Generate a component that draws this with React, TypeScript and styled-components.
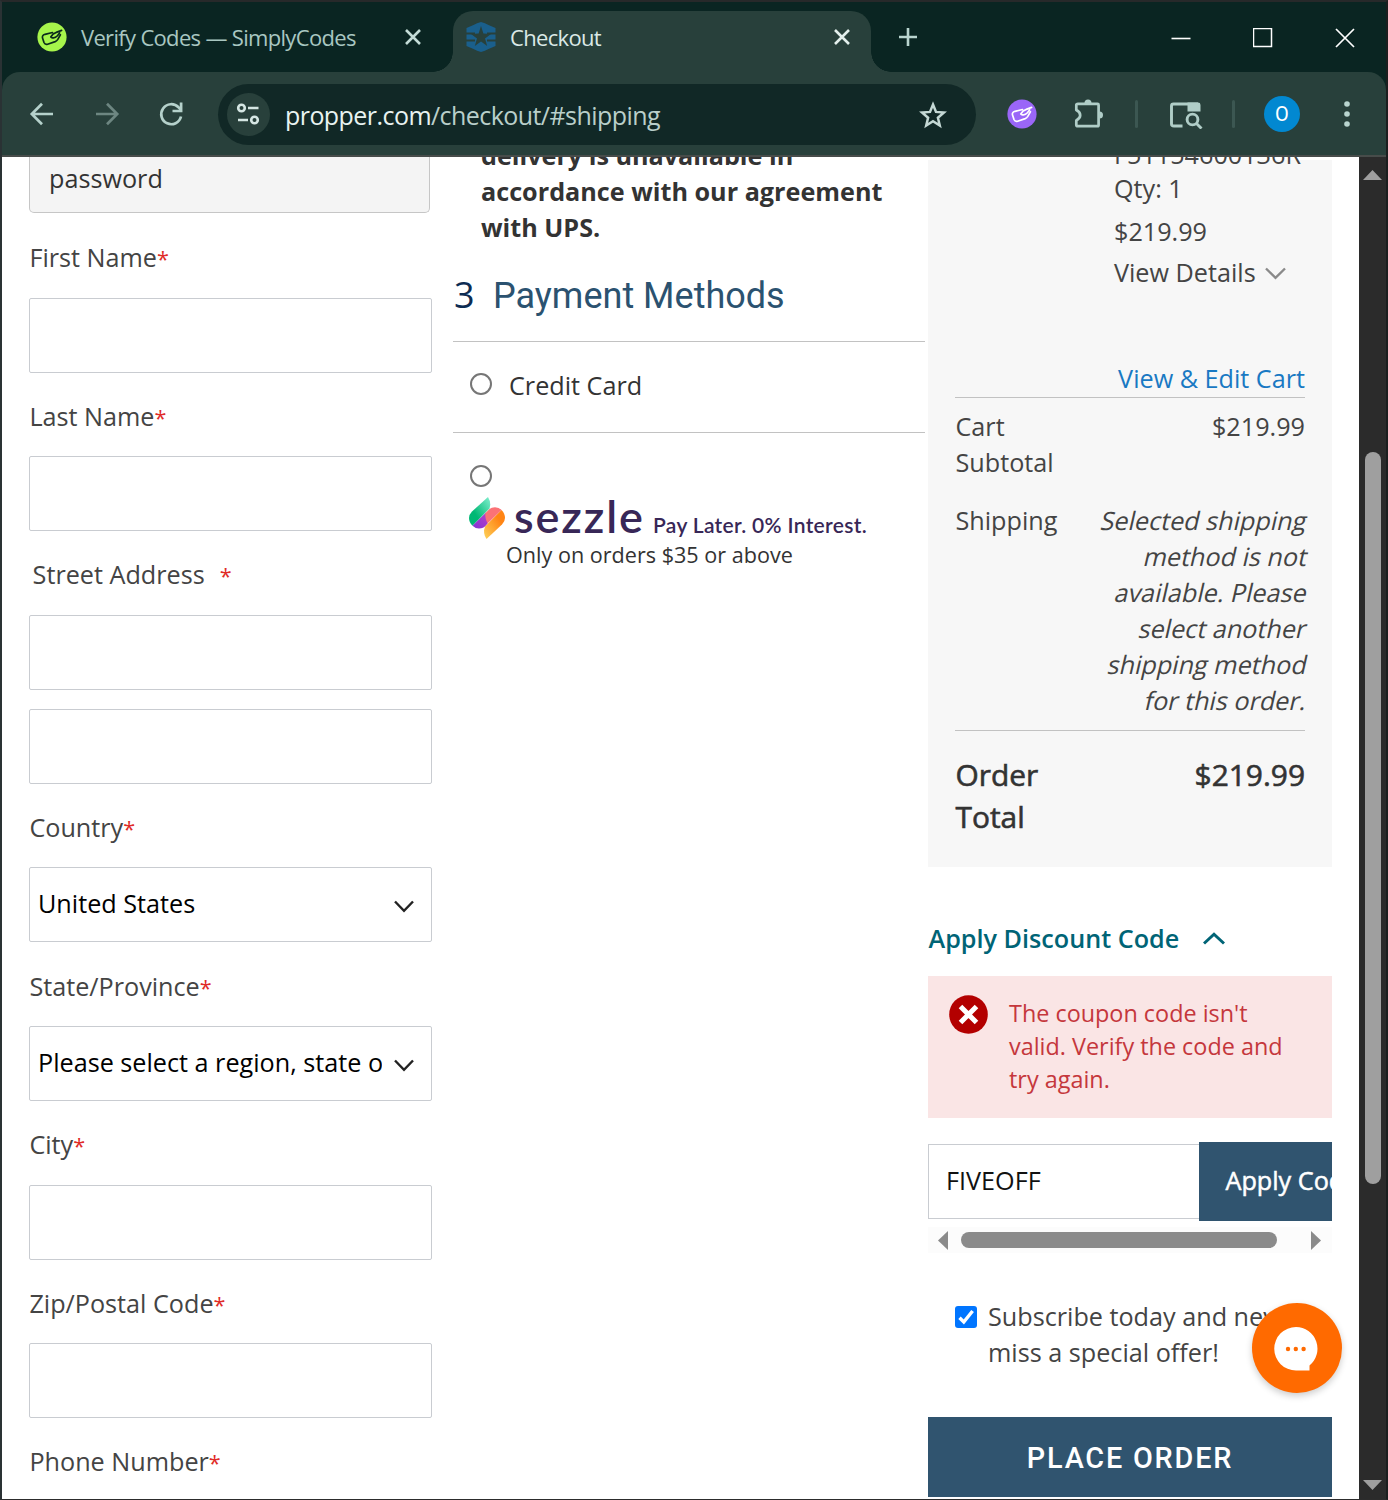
import React from "react";
import styled, { createGlobalStyle, css } from "styled-components";

const Global = createGlobalStyle`
  *, *::before, *::after { box-sizing: border-box; }
  html, body { margin: 0; padding: 0; background: #262626; }
  body { font-family: "Open Sans", "Noto Sans", sans-serif; }
`;

const Window = styled.div`
  width: 1388px;
  height: 1500px;
  display: flex;
  flex-direction: column;
  overflow: hidden;
  background: #0a2522;
  border-top: 2px solid #27292a;
  border-left: 2px solid #2a3234;
  border-right: 2px solid #1b1f1f;
  border-bottom: 1px solid #2c2c2c;
`;

/* ---------- tab strip ---------- */

const TabStrip = styled.div`
  display: flex;
  height: 70px;
  flex: none;
`;

const tabText = css`
  font-size: 22px;
  line-height: 32px;
  white-space: nowrap;
`;

const InactiveTab = styled.div`
  display: flex;
  align-items: center;
  width: 451px;
  padding: 0 0 0 35px;
  ${tabText}
  color: #a9c7c1;
`;

const ActiveTab = styled.div`
  position: relative;
  display: flex;
  align-items: center;
  width: 418px;
  height: 61px;
  margin-top: 9px;
  padding: 0 0 9px 13px;
  border-radius: 20px 20px 0 0;
  background: #28403b;
  ${tabText}
  color: #dbe9e6;

  &::before,
  &::after {
    content: "";
    position: absolute;
    bottom: 0;
    width: 20px;
    height: 20px;
  }
  &::before {
    left: -20px;
    background: radial-gradient(circle at 0 0, transparent 19.5px, #28403b 20px);
  }
  &::after {
    right: -20px;
    background: radial-gradient(circle at 100% 0, transparent 19.5px, #28403b 20px);
  }
`;

const TabTitle = styled.span`
  flex: 1;
  margin-left: 14px;
  letter-spacing: -0.68px;
`;

const TabClose = styled.span<{ $right: number }>`
  display: flex;
  margin-right: ${(p) => p.$right}px;
`;

const NewTab = styled.div`
  display: flex;
  align-items: center;
  padding-left: 27px;
  flex: 1;
`;

const WindowControls = styled.div`
  display: flex;
  align-items: center;
  gap: 62px;
  padding: 1px 31px 0 0;
`;

/* ---------- toolbar ---------- */

const Toolbar = styled.div`
  display: flex;
  align-items: center;
  height: 85px;
  flex: none;
  padding: 0 32px 0 27px;
  border-radius: 18px 18px 0 0;
  border-bottom: 2px solid #474c4a;
  background: #28403b;
`;

const NavButtons = styled.div`
  display: flex;
  align-items: center;
  gap: 38.6px;
  width: 189px;
`;

const Omnibox = styled.div`
  display: flex;
  align-items: center;
  width: 758px;
  height: 61px;
  margin-top: 2px;
  padding: 0 29px 0 9px;
  border-radius: 31px;
  background: #112826;
`;

const SiteInfo = styled.span`
  display: flex;
  align-items: center;
  justify-content: center;
  width: 43px;
  height: 43px;
  padding: 0 1px 1px 0;
  border-radius: 50%;
  background: #28403b;
`;

const Url = styled.span`
  flex: 1;
  margin-left: 15px;
  padding-top: 1px;
  font-size: 25px;
  line-height: 36px;
  letter-spacing: -0.56px;
  color: #b9cfca;
  b {
    font-weight: 400;
    color: #e8f3f1;
  }
`;

const ToolbarIcons = styled.div`
  display: flex;
  align-items: center;
  flex: 1;
  padding-left: 31px;
`;

const Divider = styled.i`
  width: 3px;
  height: 28px;
  border-radius: 2px;
  background: #3c5752;
`;

const Avatar = styled.span`
  display: flex;
  align-items: center;
  justify-content: center;
  width: 36px;
  height: 36px;
  border-radius: 50%;
  background: #0288d1;
  color: #fff;
  font: 400 20px Roboto, sans-serif;
`;

const Spacer = styled.i<{ $w: number }>`
  flex: none;
  width: ${(p) => p.$w}px;
`;

/* ---------- page ---------- */

const Viewport = styled.div`
  display: flex;
  height: 1342px;
  margin-left: -2px;
  padding-left: 2px;
  flex: none;
  overflow: hidden;
  background: linear-gradient(90deg, #6a6a6a 2px, #fff 2px);
`;

const Page = styled.main`
  display: grid;
  grid-template-columns: 403px 472px 404px;
  column-gap: 0;
  justify-content: start;
  width: 1357px;
  height: 1342px;
  padding-left: 27px;
  overflow: hidden;
  color: #333;
  font-size: 25.2px;
  line-height: 36px;
`;

const ShippingForm = styled.section`
  display: flex;
  flex-direction: column;
`;

const Hint = styled.div`
  flex: none;
  width: 401px;
  height: 55.7px;
  margin-bottom: 1.4px;
  padding: 3px 19px 0;
  border: 1px solid #c6c6c6;
  border-top: 0;
  border-radius: 0 0 5px 5px;
  background: #f4f4f4;
`;

const Field = styled.div`
  display: flex;
  flex-direction: column;
  margin-top: 25.1px;
`;

const Label = styled.label<{ $indent?: boolean }>`
  height: 36px;
  margin-bottom: 22.5px;
  padding-left: ${(p) => (p.$indent ? 3.6 : 0.4)}px;
  color: #444;
`;

const Star = styled.span<{ $gap?: number }>`
  margin-left: ${(p) => p.$gap ?? 0}px;
  color: #e02b27;
  font-size: 21.6px;
`;

const Control = styled.div`
  display: flex;
  align-items: center;
  justify-content: space-between;
  height: 75px;
  padding: 0 17px 3px 8px;
  border: 1px solid #c9ccd1;
  border-radius: 2px;
  background: #fff;
  color: #000;
  & + & {
    margin-top: 19px;
  }
  svg {
    margin-top: 6px;
  }
`;

const Choice = styled.span`
  width: 344px;
  overflow: hidden;
  white-space: nowrap;
`;

const Middle = styled.section`
  width: 472px;
  margin-left: 21px;
`;

const Notice = styled.p`
  margin: -20px 0 0;
  padding-left: 28px;
  font-weight: 700;
  color: #333;
`;

const StepTitle = styled.h2`
  display: flex;
  align-items: center;
  height: 97px;
  margin: 0;
  padding-top: 5px;
  border-bottom: 1px solid #c2c2c2;
  font: 400 36px/48px Roboto, sans-serif;
  color: #2b5270;
`;

const StepNumber = styled.span`
  width: 40px;
  padding: 0 0 2px 1px;
  font-family: "Open Sans", sans-serif;
  color: #0d2c53;
`;

const PayOption = styled.div`
  display: flex;
  height: 91px;
  padding: 25px 0 0 17px;
  border-bottom: 1px solid #c2c2c2;
  color: #333;
`;

const Radio = styled.i`
  width: 22px;
  height: 22px;
  margin-top: 6px;
  border: 2px solid #767676;
  border-radius: 50%;
  background: #fff;
`;

const OptionName = styled.span`
  margin-left: 17px;
`;

const SezzleOption = styled.div`
  display: flex;
  flex-direction: column;
  padding: 26px 0 0 17px;
`;

const SezzleRow = styled.div`
  display: flex;
  align-items: baseline;
  height: 42px;
  margin: 10px 0 0 -1px;
  font-family: Lato, sans-serif;
  color: #382757;
  white-space: nowrap;
  svg { align-self: flex-start; }
`;

const SezzleName = styled.span`
  width: 139px;
  margin-left: 9px;
  font-size: 45px;
  font-weight: 600;
  line-height: 38px;
  letter-spacing: 1.9px;
`;

const SezzleTag = styled.span`
  font-size: 21px;
  font-weight: 600;
  letter-spacing: 0.32px;
`;

const SezzleNote = styled.span`
  margin: 1px 0 0 36px;
  font-size: 21.6px;
  line-height: 30px;
`;

const Side = styled.aside`
  width: 404px;
  margin-left: 24px;
`;

const Summary = styled.div`
  display: flex;
  flex-direction: column;
  height: 707px;
  margin-top: 3px;
  padding: 0 27px 0 27px;
  background: #f7f7f7;
  color: #444;
`;

const Item = styled.div`
  height: 181px;
  margin-top: -24px;
  padding-left: 159px;
  white-space: nowrap;
`;

const ItemLine = styled.div<{ $mt?: number }>`
  display: flex;
  align-items: center;
  height: 36px;
  margin-top: ${(p) => p.$mt ?? 0}px;
  svg { margin-top: 2px; }
`;

const EditCart = styled.a`
  height: 38px;
  margin-top: 43px;
  border-bottom: 1px solid #c2c2c2;
  text-align: right;
  color: #1979c3;
`;

const TotalRow = styled.div<{ $mt: number }>`
  display: flex;
  justify-content: space-between;
  margin-top: ${(p) => p.$mt}px;
`;

const RowName = styled.span<{ $w: number }>`
  width: ${(p) => p.$w}px;
  padding-left: 0.5px;
`;

const Unavailable = styled.div`
  display: flex;
  flex-direction: column;
  align-items: flex-end;
  white-space: nowrap;
`;

/* The upright face slanted line by line, as a browser does for a family without italics. */
const Slanted = styled.span`
  transform: skewX(-13deg);
  transform-origin: 50% 80%;
`;

const GrandTotal = styled.div`
  display: flex;
  justify-content: space-between;
  margin-top: 12px;
  padding-top: 23px;
  border-top: 1px solid #c2c2c2;
  font-size: 29.9px;
  line-height: 42px;
  color: #333;
  -webkit-text-stroke: 0.6px #333;
`;

const DiscountTitle = styled.h3`
  display: flex;
  align-items: center;
  gap: 24px;
  height: 36px;
  margin: 53px 0 20px;
  padding-left: 0.5px;
  font-size: 25.2px;
  font-weight: 600;
  color: #006476;
  white-space: nowrap;
  svg { margin-top: 1px; }
`;

const ErrorBox = styled.div`
  display: flex;
  height: 142px;
  padding: 20.5px 30px 0 21px;
  background: #fae5e5;
  color: #c5373c;
  font-size: 23.4px;
  line-height: 33.2px;
  svg { flex: none; margin: -2px 21px 0 0; }
`;

const CouponRow = styled.div`
  display: flex;
  align-items: center;
  height: 79px;
  margin-top: 24px;
  overflow: hidden;
`;

const CouponInput = styled.div`
  flex: none;
  display: flex;
  align-items: center;
  width: 271px;
  height: 75px;
  padding: 0 0 3px 17px;
  border: 1px solid #c9ccd1;
  border-right: 0;
  color: #111;
`;

const ApplyButton = styled.button`
  flex: none;
  height: 79px;
  width: 190px;
  padding: 0 0 3px 26.5px;
  border: 0;
  background: #30546f;
  color: #fff;
  font: 400 25.2px/36px "Open Sans", sans-serif;
  -webkit-text-stroke: 0.5px #fff;
  text-align: left;
`;

const HScroll = styled.div`
  display: flex;
  align-items: center;
  height: 26px;
  margin-top: 6px;
  padding: 0 10px;
  background: #fcfcfc;
`;

const HThumb = styled.i`
  width: 316px;
  height: 16px;
  margin: 0 34px 0 13px;
  border-radius: 8px;
  background: #8b8b8b;
`;

const Subscribe = styled.div`
  position: relative;
  display: flex;
  margin-top: 45px;
  padding-left: 27px;
  color: #444;
  white-space: pre;
  svg { flex: none; margin: 8px 11px 0 0; }
`;

const ChatButton = styled.button`
  position: absolute;
  top: 5px;
  left: 324px;
  display: flex;
  align-items: center;
  justify-content: center;
  width: 90px;
  height: 90px;
  padding: 0;
  border: 0;
  border-radius: 50%;
  background: #ff6a00;
  box-shadow: 0 3px 7px rgba(0, 0, 0, 0.2);
  svg { margin: 1px 2px 0 0; }
`;

const PlaceOrder = styled.button`
  display: block;
  width: 404px;
  height: 80px;
  margin-top: 47px;
  padding: 1px 0 0;
  border: 0;
  background: #30546f;
  color: #fff;
  font: 500 28.8px/40px Roboto, sans-serif;
  letter-spacing: 1.8px;
`;

const Scrollbar = styled.div`
  display: flex;
  flex-direction: column;
  align-items: center;
  width: 27px;
  padding-top: 13px;
  background: #2b2b2b;
`;

const VThumb = styled.i`
  width: 16px;
  height: 732px;
  margin: 272px 0 296px;
  border-radius: 8px;
  background: #9f9f9f;
`;

/* ---------- icons ---------- */

const Cross = ({ size, color, w }: { size: number; color: string; w: number }) => (
  <svg width={size} height={size} viewBox={`0 0 ${size} ${size}`} stroke={color} strokeWidth={w}>
    <path d={`M1 1L${size - 1} ${size - 1}M${size - 1} 1L1 ${size - 1}`} />
  </svg>
);

const CodesLogo = ({ bg, ink }: { bg: string; ink: string }) => (
  <svg width="30" height="30" viewBox="0 0 30 30" fill="none">
    <circle cx="15" cy="15" r="14.6" fill={bg} />
    <path
      d="M15.500 10.500L8 12.300Q4.600 13.400 5.600 16.300L7 20.500Q8 22.900 10.600 22.200L18.200 19.600Q19.800 19 20.800 17.400L23.400 12.800M13.800 15Q15.500 11.600 19.300 10.400L24.600 8.400M14.400 15.400Q17.600 17 20.400 13.800L22.600 11"
      stroke={ink}
      strokeWidth="1.700"
      strokeLinecap="round"
      strokeLinejoin="round"
    />
  </svg>
);

const PropperLogo = () => (
  <svg width="30" height="30" viewBox="0 0 30 30">
    <path fill="#1a5f8c" d="M15 0Q19 .8 22.500 3L29.500 6V24L22.500 27Q19 29.200 15 30Q11 29.200 7.500 27L.5 24V6L7.500 3Q11 .8 15 0Z" />
    <path stroke="#28403b" strokeWidth="1.800" d="M0 11.500H9M21 11.500H30M0 18.500H9M21 18.500H30" />
    <path fill="#28403b" d="M15 4L17.400 11.600L25 11.900L19 16.400L21.200 24L15 19.500L8.800 24L11 16.400L5 11.900L12.600 11.600Z" />
  </svg>
);

const BackArrow = ({ color, flip }: { color: string; flip?: boolean }) => (
  <svg width="26" height="26" viewBox="0 0 26 26" fill="none" stroke={color} strokeWidth="2.700" transform={flip ? "scale(-1 1)" : undefined}>
    <path d="M24 13H3.500M13 2.800L2.800 13L13 23.200" />
  </svg>
);

const Reload = () => (
  <svg width="26" height="26" viewBox="0 0 26 26" fill="none" stroke="#b5d1cb" strokeWidth="2.700">
    <path d="M23 15.500A10 10 0 1 1 20.500 6.300L23 8.800" />
    <path d="M23.100 1.500V10H14.500" />
  </svg>
);

const Tune = () => (
  <svg width="24" height="24" viewBox="0 0 24 24" fill="none" stroke="#d5e6e3" strokeWidth="2.600">
    <circle cx="5.500" cy="6" r="3.300" />
    <path d="M12 6H22.500M2 18H12" />
    <circle cx="18.500" cy="18" r="3.300" />
  </svg>
);

const StarIcon = () => (
  <svg width="28" height="28" viewBox="0 0 28 28" fill="none" stroke="#c4d8d4" strokeWidth="2.500">
    <path d="M14 3.500L17 10.900L25 11.500L18.900 16.700L20.800 24.500L14 20.300L7.200 24.500L9.100 16.700L3 11.500L11 10.900Z" />
  </svg>
);

const Puzzle = () => (
  <svg width="30" height="30" viewBox="0 0 30 30" fill="none" stroke="#b0cdc7" strokeWidth="2.700" strokeLinejoin="round">
    <path d="M4 4.800H23.500Q24.600 4.800 24.600 5.900V26Q24.600 27.200 23.500 27.200H4Q2.300 27.200 2.300 26V21.500Q6.200 19.500 6.200 16.300Q6.200 13 2.300 11V6Q2.300 4.800 4 4.800Z" />
    <path d="M10.500 4A3.500 3.500 0 0 1 17.500 4ZM25.500 12.500A3.500 3.500 0 0 1 25.500 19.500Z" fill="#b0cdc7" stroke="none" />
  </svg>
);

const TabSearch = () => (
  <svg width="34" height="30" viewBox="0 0 34 30" fill="none" stroke="#b0cdc7" strokeWidth="2.900">
    <path d="M13.500 27H5Q2.500 27 2.500 25V7Q2.500 5 4.500 5H29" />
    <path d="M18.500 3.600H29Q31.500 3.600 31.500 6V12.500H18.500Z" fill="#b0cdc7" stroke="none" />
    <circle cx="23.500" cy="20.500" r="5.400" />
    <path d="M27.500 24.500L32.500 29.500" />
  </svg>
);

const Chevron = ({ up, color, w = 21, sw = 2.4 }: { up?: boolean; color: string; w?: number; sw?: number }) => (
  <svg width={w} height="13" viewBox={`0 0 ${w} 13`} fill="none" stroke={color} strokeWidth={sw}>
    <path d={up ? `M1 11.500L${w / 2} 2.200L${w - 1} 11.500` : `M1 1.500L${w / 2} 10.800L${w - 1} 1.500`} />
  </svg>
);

const SezzleMark = () => (
  <svg width="36" height="42" viewBox="0 0 36 42">
    <defs>
      <linearGradient id="szGreen" x1="0" y1="1" x2="1" y2="0">
        <stop offset="0.350" stopColor="#00b874" />
        <stop offset="1" stopColor="#84f0d0" />
      </linearGradient>
      <linearGradient id="szOrange" x1="1" y1="0" x2="0" y2="1">
        <stop offset="0.300" stopColor="#ff8414" />
        <stop offset="1" stopColor="#fdd35a" />
      </linearGradient>
      <linearGradient id="szPurple" x1="0" y1="1" x2="1" y2="0">
        <stop offset="0" stopColor="#8333d4" />
        <stop offset="1" stopColor="#b742c9" />
      </linearGradient>
    </defs>
    <path fill="url(#szGreen)" d="M19 0Q22.500 5.500 20.500 11.500L3.500 28.800Q0 25.500 0 21Q0 17.500 3 14.500Z" />
    <path fill="url(#szPurple)" d="M3.500 28.800L17 15.500L19 26L17 28.500Q14.500 31.500 10 31.500Q6 31.500 3.500 28.800Z" />
    <path fill="#fb7276" d="M16.500 16L20.500 12Q22.500 10.300 26 10.300Q30 10.300 32.500 13L18.500 26.500Q15.500 21 16.500 16Z" />
    <path fill="url(#szOrange)" d="M32.500 13Q36 16.500 36 21Q36 24.500 33 27.500L17.500 42Q13.500 36 16 29.500Z" />
  </svg>
);

const ErrorIcon = () => (
  <svg width="39" height="39" viewBox="0 0 39 39">
    <circle cx="19.500" cy="19.500" r="19.300" fill="#b30000" />
    <path d="M11.500 11.500L27.500 27.500M27.500 11.500L11.500 27.500" stroke="#fff" strokeWidth="5" />
  </svg>
);

const Check = () => (
  <svg width="22" height="22" viewBox="0 0 22 22">
    <rect width="22" height="22" rx="3" fill="#0075ff" />
    <path d="M4.500 11.800L8.800 16L17.600 5" fill="none" stroke="#fff" strokeWidth="3.400" />
  </svg>
);

const Bubble = () => (
  <svg width="44" height="44" viewBox="0 0 44 44">
    <path fill="#fff" d="M22 0A21.700 21.700 0 0 1 35.500 38.500V43.500H22A21.700 21.700 0 0 1 22 0Z" />
    <g fill="#ff6a00">
      <circle cx="14" cy="22" r="2.200" />
      <circle cx="21.800" cy="22" r="2.200" />
      <circle cx="29.600" cy="22" r="2.200" />
    </g>
  </svg>
);

const Triangle = ({ d, w, h, color }: { d: string; w: number; h: number; color: string }) => (
  <svg width={w} height={h} viewBox={`0 0 ${w} ${h}`}>
    <path d={d} fill={color} />
  </svg>
);

/* ---------- data ---------- */

const fields = [
  { label: "First Name", controls: [""] },
  { label: "Last Name", controls: [""] },
  { label: "Street Address", indent: true, controls: ["", ""] },
  { label: "Country", controls: ["United States"], select: true },
  { label: "State/Province", controls: ["Please select a region, state or province."], select: true },
  { label: "City", controls: [""] },
  { label: "Zip/Postal Code", controls: [""] },
  { label: "Phone Number", controls: [""] },
];

const shippingNotice = [
  "Selected shipping",
  "method is not",
  "available. Please",
  "select another",
  "shipping method",
  "for this order.",
];

export default function App() {
  return (
    <>
      <Global />
      <Window>
        <TabStrip>
          <InactiveTab>
            <CodesLogo bg="#a6f54b" ink="#0b2a1c" />
            <TabTitle>Verify Codes — SimplyCodes</TabTitle>
            <TabClose $right={32}><Cross size={16} color="#c3dcd7" w={2.6} /></TabClose>
          </InactiveTab>
          <ActiveTab>
            <PropperLogo />
            <TabTitle>Checkout</TabTitle>
            <TabClose $right={21}><Cross size={16} color="#e3efec" w={2.6} /></TabClose>
          </ActiveTab>
          <NewTab>
            <svg width="20" height="20" viewBox="0 0 20 20" stroke="#b9d5cf" strokeWidth="2.600"><path d="M10 1V19M1 10H19" /></svg>
          </NewTab>
          <WindowControls>
            <svg width="20" height="20" viewBox="0 0 20 20"><path d="M0.500 10.500H19.500" stroke="#fff" strokeWidth="1.600" /></svg>
            <svg width="20" height="20" viewBox="0 0 20 20"><rect x="0.500" y="0.500" width="18" height="18" fill="none" stroke="#fff" strokeWidth="1.500" /></svg>
            <Cross size={20} color="#fff" w={1.7} />
          </WindowControls>
        </TabStrip>
        <Toolbar>
          <NavButtons>
            <BackArrow color="#b5d1cb" />
            <BackArrow color="#6d8681" flip />
            <Reload />
          </NavButtons>
          <Omnibox>
            <SiteInfo><Tune /></SiteInfo>
            <Url><b>propper.com</b>/checkout/#shipping</Url>
            <StarIcon />
          </Omnibox>
          <ToolbarIcons>
            <CodesLogo bg="#9a66f8" ink="#fff" />
            <Spacer $w={37} />
            <Puzzle />
            <Spacer $w={31} />
            <Divider />
            <Spacer $w={31} />
            <TabSearch />
            <Spacer $w={29} />
            <Divider />
            <Spacer $w={29} />
            <Avatar>O</Avatar>
            <Spacer $w={44} />
            <svg width="6" height="28" viewBox="0 0 6 28" fill="#b9d5cf"><circle cx="3" cy="4" r="2.800" /><circle cx="3" cy="14" r="2.800" /><circle cx="3" cy="24" r="2.800" /></svg>
          </ToolbarIcons>
        </Toolbar>
        <Viewport>
          <Page>
            <ShippingForm>
              <Hint>password</Hint>
              {fields.map((f) => (
                <Field key={f.label}>
                  <Label $indent={f.indent}>{f.label}<Star $gap={f.indent ? 15 : 0}>*</Star></Label>
                  {f.controls.map((text, i) => (
                    <Control key={i}>
                      <Choice>{text}</Choice>
                      {f.select && <Chevron color="#222" w={20} />}
                    </Control>
                  ))}
                </Field>
              ))}
            </ShippingForm>
            <Middle>
              <Notice>delivery is unavailable in<br />accordance with our agreement<br />with UPS.</Notice>
              <StepTitle><StepNumber>3</StepNumber>Payment Methods</StepTitle>
              <PayOption><Radio /><OptionName>Credit Card</OptionName></PayOption>
              <SezzleOption>
                <Radio />
                <SezzleRow><SezzleMark /><SezzleName>sezzle</SezzleName><SezzleTag>Pay Later. 0% Interest.</SezzleTag></SezzleRow>
                <SezzleNote>Only on orders $35 or above</SezzleNote>
              </SezzleOption>
            </Middle>
            <Side>
              <Summary>
                <Item>
                  <ItemLine>F51154600136R</ItemLine>
                  <ItemLine $mt={-2}>Qty: 1</ItemLine>
                  <ItemLine $mt={7}>$219.99</ItemLine>
                  <ItemLine $mt={5}>View Details<Spacer $w={9} /><Chevron color="#8a8a8a" /></ItemLine>
                </Item>
                <EditCart>View &amp; Edit Cart</EditCart>
                <TotalRow $mt={10}><RowName $w={120}>Cart Subtotal</RowName><span>$219.99</span></TotalRow>
                <TotalRow $mt={22}>
                  <RowName $w={120}>Shipping</RowName>
                  <Unavailable>{shippingNotice.map((line) => <Slanted key={line}>{line}</Slanted>)}</Unavailable>
                </TotalRow>
                <GrandTotal><RowName $w={100}>Order Total</RowName><span>$219.99</span></GrandTotal>
              </Summary>
              <DiscountTitle>Apply Discount Code<Chevron up color="#006476" w={22} sw={3} /></DiscountTitle>
              <ErrorBox><ErrorIcon /><span>The coupon code isn't valid. Verify the code and try again.</span></ErrorBox>
              <CouponRow><CouponInput>FIVEOFF</CouponInput><ApplyButton>Apply Code</ApplyButton></CouponRow>
              <HScroll>
                <Triangle d="M10 0V19L0 9.500Z" w={10} h={19} color="#8b8b8b" />
                <HThumb />
                <Triangle d="M0 0V19L10 9.500Z" w={10} h={19} color="#8b8b8b" />
              </HScroll>
              <Subscribe>
                <Check />
                <span>{"Subscribe today and never\nmiss a special offer!"}</span>
                <ChatButton aria-label="Chat"><Bubble /></ChatButton>
              </Subscribe>
              <PlaceOrder>PLACE ORDER</PlaceOrder>
            </Side>
          </Page>
          <Scrollbar>
            <Triangle d="M0 10H19L9.500 0Z" w={19} h={10} color="#9f9f9f" />
            <VThumb />
            <Triangle d="M0 0H19L9.500 10Z" w={19} h={10} color="#9f9f9f" />
          </Scrollbar>
        </Viewport>
      </Window>
    </>
  );
}
